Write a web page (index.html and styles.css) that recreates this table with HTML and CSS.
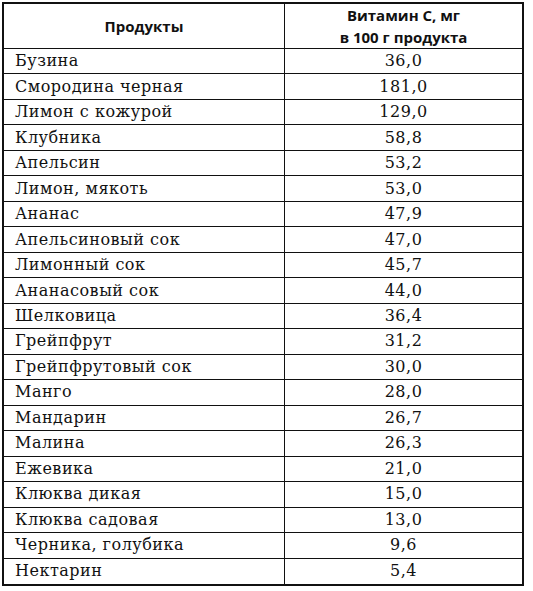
FILE: index.html
```html
<!DOCTYPE html>
<html lang="ru">
<head>
<meta charset="utf-8">
<title>Витамин С</title>
<link rel="stylesheet" href="styles.css">
</head>
<body>
<div class="vit">
  <div class="cell head">Продукты</div>
  <div class="cell head last">Витамин С, мг<br>в 100 г продукта</div>
  <div class="cell name">Бузина</div><div class="cell val">36,0</div>
  <div class="cell name">Смородина черная</div><div class="cell val">181,0</div>
  <div class="cell name">Лимон с кожурой</div><div class="cell val">129,0</div>
  <div class="cell name">Клубника</div><div class="cell val">58,8</div>
  <div class="cell name">Апельсин</div><div class="cell val">53,2</div>
  <div class="cell name">Лимон, мякоть</div><div class="cell val">53,0</div>
  <div class="cell name">Ананас</div><div class="cell val">47,9</div>
  <div class="cell name">Апельсиновый сок</div><div class="cell val">47,0</div>
  <div class="cell name">Лимонный сок</div><div class="cell val">45,7</div>
  <div class="cell name">Ананасовый сок</div><div class="cell val">44,0</div>
  <div class="cell name">Шелковица</div><div class="cell val">36,4</div>
  <div class="cell name">Грейпфрут</div><div class="cell val">31,2</div>
  <div class="cell name">Грейпфрутовый сок</div><div class="cell val">30,0</div>
  <div class="cell name">Манго</div><div class="cell val">28,0</div>
  <div class="cell name">Мандарин</div><div class="cell val">26,7</div>
  <div class="cell name">Малина</div><div class="cell val">26,3</div>
  <div class="cell name">Ежевика</div><div class="cell val">21,0</div>
  <div class="cell name">Клюква дикая</div><div class="cell val">15,0</div>
  <div class="cell name">Клюква садовая</div><div class="cell val">13,0</div>
  <div class="cell name">Черника, голубика</div><div class="cell val">9,6</div>
  <div class="cell name bottom">Нектарин</div><div class="cell val bottom">5,4</div>
</div>
</body>
</html>
```
FILE: styles.css
```css
html, body {
  margin: 0;
  padding: 0;
  background: #ffffff;
}
body {
  padding: 2px 0 0 2px;
}
.vit {
  box-sizing: border-box;
  width: 522px;
  height: 584px;
  border: 2px solid #111;
  display: grid;
  grid-template-columns: 281px 1fr;
  grid-template-rows: 45px repeat(21, 1fr);
  color: #111;
}
.cell {
  box-sizing: border-box;
  display: flex;
  align-items: center;
  border-bottom: 1.5px solid #111;
  min-height: 0;
}
.name,
.head:first-child {
  border-right: 1.5px solid #111;
}
.bottom {
  border-bottom: none;
}
.head {
  justify-content: center;
  text-align: center;
  font-family: "Open Sans", "DejaVu Sans", sans-serif;
  font-weight: 700;
  font-size: 15px;
  line-height: 22px;
  padding-bottom: 1px;
}
.name,
.val {
  font-family: "DejaVu Serif", "Liberation Serif", serif;
  font-size: 16px;
  letter-spacing: 0.5px;
  line-height: 20px;
}
.name {
  padding-left: 11px;
}
.val {
  justify-content: center;
}
```
